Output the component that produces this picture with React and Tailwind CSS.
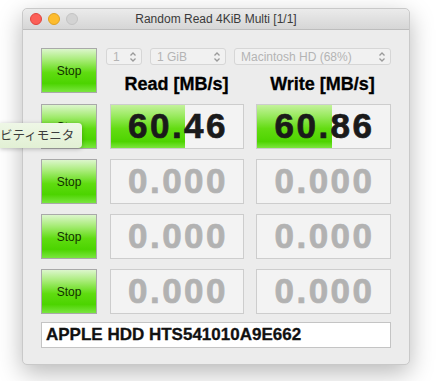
import React from "react";

const stopBtn =
  "w-[56px] h-[45px] shrink-0 border border-[#a9a9a9] bg-[linear-gradient(to_bottom,#dcf6cc_0%,#a8ec78_25%,#5fdc10_55%,#4cd400_80%,#7ae640_100%)] flex items-center justify-center text-[12px] text-[#123000]";

const Chevrons = () => (
  <svg width="8" height="12" viewBox="0 0 8 12" fill="none" stroke="#9a9a9a" strokeWidth="1.3">
    <path d="M1.5 4.5 L4 2 L6.5 4.5" />
    <path d="M1.5 7.5 L4 10 L6.5 7.5" />
  </svg>
);

const Select = ({ label, w }) => (
  <div
    className={`${w} h-[17px] rounded-[3px] border border-[#d6d6d6] bg-[#f1f1f1] flex items-center justify-between pl-[6px] pr-[4px] text-[12px] text-[#b4b4b4]`}
  >
    <span>{label}</span>
    <Chevrons />
  </div>
);

const ValueBox = ({ value, fill, w }) => (
  <div className={`${w} h-[45px] relative border border-[#cdcdcd] bg-[#f3f3f3] overflow-hidden`}>
    {fill > 0 && (
      <div
        className="absolute left-0 top-0 bottom-0 bg-[linear-gradient(to_bottom,#c4f29c_0%,#9aea60_25%,#63dc12_55%,#4ed400_85%,#7ce63e_100%)]"
        style={{ width: `${fill}px` }}
      />
    )}
    <div
      className={`relative h-full flex items-center justify-center pl-[2px] text-[35px] font-bold tracking-[2.5px] [-webkit-text-stroke:0.7px_currentColor] ${
        fill > 0 ? "text-[#1a1a1a]" : "text-[#b2b2b2]"
      }`}
    >
      {value}
    </div>
  </div>
);

const rows = [
  { read: "60.46", readFill: 74, write: "60.86", writeFill: 75 },
  { read: "0.000", readFill: 0, write: "0.000", writeFill: 0 },
  { read: "0.000", readFill: 0, write: "0.000", writeFill: 0 },
  { read: "0.000", readFill: 0, write: "0.000", writeFill: 0 },
];

export default function App() {
  return (
    <div
      className="w-[437px] h-[381px] bg-white relative overflow-hidden pl-[22px] pt-[8px]"
      style={{ fontFamily: '"Liberation Sans", Arial, sans-serif' }}
    >
      {/* window */}
      <div className="w-[388px] h-[357px] bg-[#ececec] rounded-[5px] border border-[#c9c9c9] shadow-[0_8px_24px_rgba(0,0,0,0.28)] flex flex-col">
        {/* title bar */}
        <div className="h-[21px] shrink-0 rounded-t-[5px] bg-[linear-gradient(to_bottom,#ebebeb,#d6d6d6)] border-b border-[#bdbdbd] relative flex items-center justify-center">
          <div className="absolute left-[7px] top-[4px] flex gap-[6px]">
            <div className="w-[12px] h-[12px] rounded-full bg-[#fc5f57] border border-[#e0443e]" />
            <div className="w-[12px] h-[12px] rounded-full bg-[#fdbc2e] border border-[#dea123]" />
            <div className="w-[12px] h-[12px] rounded-full bg-[#d3d3d3] border border-[#c4c4c4]" />
          </div>
          <span className="text-[12px] text-[#3a3a3a]">Random Read 4KiB Multi [1/1]</span>
        </div>

        {/* body */}
        <div className="flex flex-col pl-[18px] pt-[18px] gap-[10px]">
          {/* first row */}
          <div className="flex">
            <div className={stopBtn}>Stop</div>
            <div className="ml-[9px] flex flex-col">
              <div className="flex gap-[8px]">
                <Select label="1" w="w-[36px]" />
                <Select label="1 GiB" w="w-[76px]" />
                <Select label="Macintosh HD (68%)" w="w-[157px]" />
              </div>
              <div className="flex mt-[9px] pl-[4px] text-[18px] font-bold text-black leading-[20px] [-webkit-text-stroke:0.3px_currentColor]">
                <div className="w-[133px] text-center">Read [MB/s]</div>
                <div className="w-[135px] ml-[12px] text-center">Write [MB/s]</div>
              </div>
            </div>
          </div>

          {rows.map((r, i) => (
            <div key={i} className="flex">
              <div className={stopBtn}>Stop</div>
              <div className="ml-[13px] flex gap-[12px]">
                <ValueBox value={r.read} fill={r.readFill} w="w-[134px]" />
                <ValueBox value={r.write} fill={r.writeFill} w="w-[135px]" />
              </div>
            </div>
          ))}

          <div className="w-[350px] h-[26px] -mt-[2px] bg-white border border-[#c4c4c4] flex items-center pl-[4px] text-[17px] font-bold text-[#111] [-webkit-text-stroke:0.3px_currentColor]">
            APPLE HDD HTS541010A9E662
          </div>
        </div>
      </div>

      {/* tooltip */}
      <div
        className="absolute left-0 top-[123px] w-[82px] h-[25px] rounded-r-[4px] bg-[linear-gradient(to_bottom,#eef7e6,#e2f0d4)] shadow-[0_1px_4px_rgba(0,0,0,0.25)] flex items-center text-[12.5px] text-[#3c3c3c]"
        style={{ fontFamily: '"Noto Sans CJK JP", sans-serif' }}
      >
        ビティモニタ
      </div>
    </div>
  );
}
